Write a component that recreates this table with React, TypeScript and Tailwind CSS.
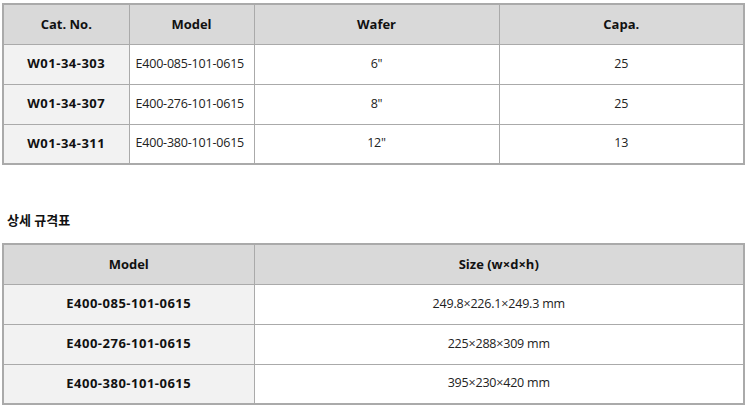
const specRows = [
  { cat: "W01-34-303", model: "E400-085-101-0615", wafer: "6\"", capa: "25" },
  { cat: "W01-34-307", model: "E400-276-101-0615", wafer: "8\"", capa: "25" },
  { cat: "W01-34-311", model: "E400-380-101-0615", wafer: "12\"", capa: "13" },
];

const sizeRows = [
  { model: "E400-085-101-0615", size: "249.8×226.1×249.3 mm" },
  { model: "E400-276-101-0615", size: "225×288×309 mm" },
  { model: "E400-380-101-0615", size: "395×230×420 mm" },
];

const th = "h-[40px] border border-[#aaaaaa] bg-[#d9d9d9] text-center font-bold text-[#111]";
const tdHead = "h-[40px] border border-[#aaaaaa] bg-[#f2f2f2] text-center font-bold tracking-[0.5px] text-[#111]";
const td = "h-[40px] border border-[#aaaaaa] bg-white text-center text-[12.5px] tracking-[-0.2px]";

export default function App() {
  return (
    <div className="w-[747px] h-[406px] bg-white px-[2px] pt-[3px] text-[13px] text-[#222] font-['Open_Sans','Noto_Sans_CJK_KR',sans-serif]">
      <table className="w-[743px] table-fixed border-collapse border-2 border-[#aaaaaa]">
        <colgroup>
          <col className="w-[126px]" />
          <col className="w-[125px]" />
          <col className="w-[245px]" />
          <col />
        </colgroup>
        <thead>
          <tr>
            <th className={th}>Cat. No.</th>
            <th className={th}>Model</th>
            <th className={th}>Wafer</th>
            <th className={th}>Capa.</th>
          </tr>
        </thead>
        <tbody>
          {specRows.map((r) => (
            <tr key={r.cat}>
              <td className={tdHead}>{r.cat}</td>
              <td className={td + " text-left pl-[6px]"}>{r.model}</td>
              <td className={td}>{r.wafer}</td>
              <td className={td}>{r.capa}</td>
            </tr>
          ))}
        </tbody>
      </table>

      <h3 className="mt-[46px] mb-[14px] pl-[5px] text-[13px] font-bold leading-[18px] text-[#111]">상세 규격표</h3>

      <table className="w-[743px] table-fixed border-collapse border-2 border-[#aaaaaa]">
        <colgroup>
          <col className="w-[251px]" />
          <col />
        </colgroup>
        <thead>
          <tr>
            <th className={th}>Model</th>
            <th className={th}>Size (w×d×h)</th>
          </tr>
        </thead>
        <tbody>
          {sizeRows.map((r) => (
            <tr key={r.model}>
              <td className={tdHead}>{r.model}</td>
              <td className={td}>{r.size}</td>
            </tr>
          ))}
        </tbody>
      </table>
    </div>
  );
}
